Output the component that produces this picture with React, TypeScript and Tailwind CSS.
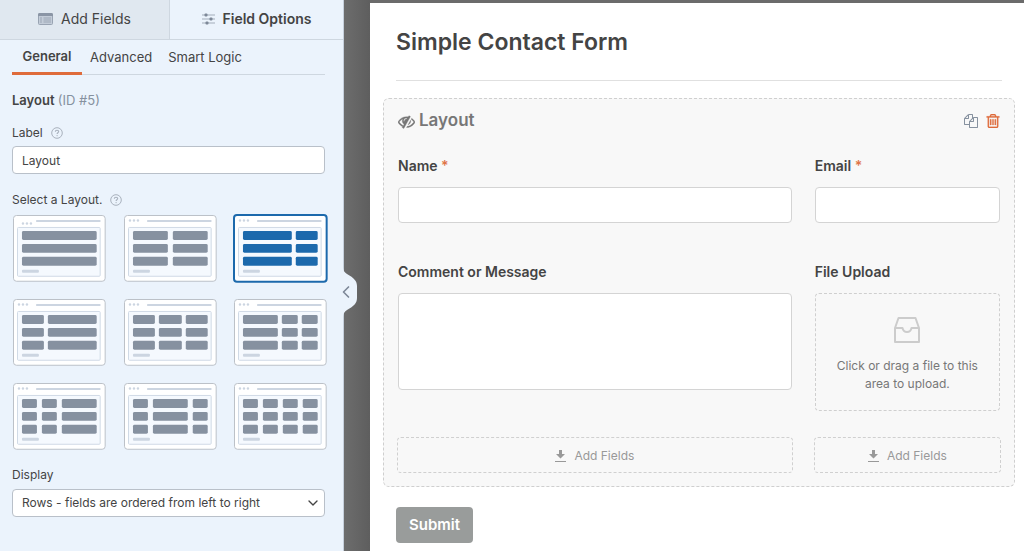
import { useState } from "react";
import { ChevronDown, ChevronLeft } from "lucide-react";

// columns of each preset, as [x, width] inside the thumbnail
const layouts = [
  { name: "One column", cols: [[9, 75]] },
  { name: "Two equal columns", cols: [[9, 35], [49, 35]] },
  { name: "Two thirds, one third", cols: [[9, 49], [62, 22]] },
  { name: "One third, two thirds", cols: [[9, 22], [35, 49]] },
  { name: "Three equal columns", cols: [[9, 22], [35, 23], [62, 22]] },
  { name: "Half, two quarters", cols: [[9, 35], [48, 16], [68, 16]] },
  { name: "Two quarters, half", cols: [[9, 15], [29, 15], [49, 35]] },
  { name: "Quarter, half, quarter", cols: [[9, 15], [29, 35], [69, 15]] },
  { name: "Four equal columns", cols: [[9, 15], [29, 15], [49, 15], [69, 15]] },
];

function LayoutThumb({ cols, active, low }: { cols: number[][]; active: boolean; low: boolean }) {
  const dotX = low ? 10 : 6;
  const dotY = low ? 8 : 5;
  return (
    <svg viewBox="0 0 93 67" className="block w-full overflow-visible">
      <rect
        x={active ? 0 : 0.5}
        y={active ? 0 : 0.5}
        width={active ? 93 : 92}
        height={active ? 67 : 66}
        rx="3"
        fill="#fff"
        stroke={active ? "#1c69ac" : "#bcc1c8"}
        strokeWidth={active ? 2 : 1}
      />
      {[0, 1, 2].map((i) => (
        <circle key={i} cx={dotX + i * 4} cy={dotY + 0.5} r="1.2" fill="#ccd5e1" />
      ))}
      <rect x="23" y="5" width="65" height="2" rx="1" fill="#ccd5e1" />
      <rect x="4.5" y="12.5" width="83" height="49" rx="1" fill="#f5f9fe" stroke="#d0dae6" />
      {[16, 29, 42].map((y) =>
        cols.map(([x, w]) => (
          <rect key={`${x}-${y}`} x={x} y={y} width={w} height="9" rx="1.5" fill={active ? "#1c69ac" : "#8691a0"} />
        ))
      )}
      <rect x="9" y="55" width="17" height="3" rx="1" fill="#ccd5e1" />
    </svg>
  );
}

function Help() {
  return (
    <svg viewBox="0 0 12 12" className="size-3 text-[#a9b1bd]" fill="none" stroke="currentColor">
      <circle cx="6" cy="6" r="5.3" strokeWidth="1" />
      <path d="M4.3 4.8c0-1 .7-1.6 1.7-1.6s1.7.6 1.7 1.4c0 1.1-1.6 1.1-1.6 2.3" strokeWidth="1.1" />
      <circle cx="6.1" cy="8.7" r=".35" strokeWidth=".7" />
    </svg>
  );
}

function ListIcon() {
  return (
    <svg viewBox="0 0 15 12" className="h-3 w-[15px]" fill="none">
      <rect x=".5" y=".5" width="14" height="11" rx="1" fill="#c3ccd8" stroke="#98a3b2" />
      <path d="M0 1.5Q0 0 1.5 0h12Q15 0 15 1.5V3H0z" fill="#8a95a5" />
      <path d="M2 5h2M2 7h2M2 9h2M5.5 5H13M5.5 7H13M5.5 9H13" stroke="#9ba6b5" />
    </svg>
  );
}

function SlidersIcon() {
  return (
    <svg viewBox="0 0 13 12" className="h-3 w-[13px]" fill="none" stroke="#a4adba">
      <path d="M0 2h13M0 6h13M0 10h13" strokeWidth="1.2" />
      <g fill="#7d8898" stroke="none">
        <rect x="2.5" y=".5" width="3" height="3" rx="1" />
        <rect x="7.5" y="4.5" width="3" height="3" rx="1" />
        <rect x="3.5" y="8.5" width="3" height="3" rx="1" />
      </g>
    </svg>
  );
}

function EyeSlash() {
  return (
    <svg viewBox="0 0 1792 1792" className="size-[17px]" fill="currentColor" stroke="currentColor" strokeWidth="30">
      <path d="M555 1335l78-141q-87-63-136-159t-49-203q0-121 61-225-229 117-381 353 167 258 427 375zm389-759q0-20-14-34t-34-14q-125 0-214.5 89.5t-89.5 214.5q0 20 14 34t34 14 34-14 14-34q0-86 61-147t147-61q20 0 34-14t14-34zm363-191q0 7-1 9-105 188-315 566t-316 567l-49 89q-10 16-28 16-12 0-134-70-16-10-16-28 0-12 44-87-143-65-263.5-173t-208.5-245q-20-31-20-69t20-69q153-235 380-371t496-136q89 0 180 17l54-97q10-16 28-16 5 0 18 6t31 15.5 33 18.5 31.5 18.5 19.5 11.5q16 10 16 27zm37 447q0 139-79 253.5t-209 164.5l280-502q8 45 8 84zm448 128q0 35-20 69-39 64-109 145-150 172-347.5 267t-419.5 95l74-132q212-18 392.5-137t301.5-307q-115-179-282-294l63-112q95 64 182.5 153t144.5 184q20 34 20 69z" />
    </svg>
  );
}

function FilesIcon() {
  return (
    <svg viewBox="0 0 1792 1792" className="size-[14px]" fill="currentColor">
      <path d="M1696 384q40 0 68 28t28 68v1216q0 40-28 68t-68 28h-960q-40 0-68-28t-28-68v-288h-544q-40 0-68-28t-28-68v-672q0-40 20-88t48-76l408-408q28-28 76-48t88-20h416q40 0 68 28t28 68v328q68-40 128-40h416zm-544 213l-299 299h299v-299zm-640-384l-299 299h299v-299zm196 647l316-316v-416h-384v416q0 40-28 68t-68 28h-416v640h512v-256q0-40 20-88t48-76zm956 804v-1152h-384v416q0 40-28 68t-68 28h-416v640h896z" />
    </svg>
  );
}

function TrashIcon() {
  return (
    <svg viewBox="128 128 1536 1536" className="size-[14px]" fill="currentColor" stroke="currentColor" strokeWidth="30">
      <path d="M704 736v576q0 14-9 23t-23 9h-64q-14 0-23-9t-9-23v-576q0-14 9-23t23-9h64q14 0 23 9t9 23zm256 0v576q0 14-9 23t-23 9h-64q-14 0-23-9t-9-23v-576q0-14 9-23t23-9h64q14 0 23 9t9 23zm256 0v576q0 14-9 23t-23 9h-64q-14 0-23-9t-9-23v-576q0-14 9-23t23-9h64q14 0 23 9t9 23zm128 724v-948h-896v948q0 22 7 40.5t14.5 27 10.5 8.5h832q3 0 10.5-8.5t14.5-27 7-40.5zm-672-1076h448l-48-117q-7-9-17-11h-317q-10 2-17 11zm928 32v64q0 14-9 23t-23 9h-96v948q0 83-47 143.5t-113 60.5h-832q-66 0-113-58.5t-47-141.5v-952h-96q-14 0-23-9t-9-23v-64q0-14 9-23t23-9h309l70-167q15-37 54-63t79-26h320q40 0 79 26t54 63l70 167h309q14 0 23 9t9 23z" />
    </svg>
  );
}

function AddFieldsButton() {
  return (
    <button className="-mx-px mt-[26px] flex h-9 items-center justify-center gap-2 rounded border border-dashed border-[#d0d0d0] pt-px text-xs text-[#999]">
      <svg viewBox="0 0 11 12" className="h-3 w-[11px]" fill="currentColor">
        <path d="M4 0h3v4h3L5.5 8.500 1 4h3zM0 11h11v1H0z" />
      </svg>
      Add Fields
    </button>
  );
}

function Required() {
  return <span className="text-[#df7448]">*</span>;
}

export default function App() {
  const [selected, setSelected] = useState(2);

  return (
    <div className="flex min-h-screen bg-[#6b6b6b] font-['Inter','Liberation_Sans',sans-serif] text-[#444]">
      <aside className="relative w-[344px] shrink-0 border-r border-[#c6d0dc] bg-[#ebf3fc]">
        <div className="flex h-10 text-sm">
          <button className="flex w-[170px] items-center justify-center gap-2 border-r border-b border-[#ced7e0] bg-[#e0e8f0] pb-0.5">
            <ListIcon />
            Add Fields
          </button>
          <button className="flex flex-1 items-center justify-center gap-2 border-b border-[#ced7e0] pb-0.5 font-semibold">
            <SlidersIcon />
            Field Options
          </button>
        </div>

        <div className="pr-[18px] pl-3 text-xs">
          <nav className="flex h-[35px] border-b border-[#ced7e0] text-[13px]">
            <a href="#general" className="-mb-px flex w-[70px] items-center justify-center border-b-3 border-[#df6b3b] pt-0.5 font-semibold">
              General
            </a>
            <a href="#advanced" className="ml-2 flex items-center pt-0.5">Advanced</a>
            <a href="#logic" className="ml-4 flex items-center pt-0.5">Smart Logic</a>
          </nav>

          <h2 className="mt-[17px] text-[13px] leading-4 font-semibold">
            Layout <span className="font-normal text-[#86919f]">(ID #5)</span>
          </h2>

          <div className="mt-[17px] flex items-center gap-2">
            <label htmlFor="label">Label</label>
            <Help />
          </div>
          <input
            id="label"
            defaultValue="Layout"
            className="mt-[5px] block h-7 w-full rounded border border-[#b9c0c9] bg-white px-[9px] pt-px"
          />

          <div className="mt-[18px] flex items-center gap-2">
            <span>Select a Layout.</span>
            <Help />
          </div>
          <div className="mt-[7px] -mr-0.5 ml-px grid grid-cols-3 gap-x-[18px] gap-y-[17px]">
            {layouts.map((l, i) => (
              <button key={l.name} aria-label={l.name} aria-pressed={selected === i} onClick={() => setSelected(i)}>
                <LayoutThumb cols={l.cols} active={selected === i} low={i === 0} />
              </button>
            ))}
          </div>

          <label htmlFor="display" className="mt-[18px] block leading-4">Display</label>
          <div className="relative mt-1.5">
            <select id="display" className="h-7 w-full appearance-none rounded border border-[#b9c0c9] bg-white px-[9px]">
              <option>Rows - fields are ordered from left to right</option>
              <option>Columns - fields are ordered from top to bottom</option>
            </select>
            <ChevronDown className="pointer-events-none absolute top-1.5 right-1 size-4" strokeWidth={2} />
          </div>
        </div>

        <button aria-label="Collapse sidebar" className="absolute top-[267px] left-[335px] flex h-[50px] w-[22px] items-center justify-center">
          <svg viewBox="0 0 22 50" className="absolute inset-0 size-full" fill="#ebf3fc">
            <path d="M0 0h8c0 3 1 5 4 7 7 4 10 7 10 12v12c0 5-3 8-10 12-3 2-4 4-4 7H0z" />
          </svg>
          <ChevronLeft className="relative size-5 text-[#7d8898]" strokeWidth={2} />
        </button>
      </aside>

      <div className="w-[26px] shrink-0 bg-linear-to-r from-[#6d6d6d] to-[#5e5e5e]" />

      <main className="mt-[3px] min-w-0 flex-1 bg-white pr-[9px] pb-2 pl-[13px]">
        <h1 className="mr-[13px] ml-[13px] border-b border-[#e0e0e0] pt-[25px] pb-[23px] text-[23px] leading-[29px] font-semibold">
          Simple Contact Form
        </h1>

        <section className="mt-[17px] rounded-md border border-dashed border-[#cfcfcf] bg-[#f8f8f8] px-[14px] pt-3 pb-[13px]">
          <header className="flex h-5 items-center justify-between">
            <h2 className="flex items-center gap-1 text-[17px] font-semibold text-[#777]">
              <EyeSlash />
              Layout
            </h2>
            <div className="flex gap-2">
              <button aria-label="Duplicate" className="text-[#86919f]"><FilesIcon /></button>
              <button aria-label="Delete" className="text-[#df6b3b]"><TrashIcon /></button>
            </div>
          </header>

          <div className="mt-[25px] grid grid-cols-[68fr_32fr] gap-x-[23px] text-sm">
            <div className="flex min-w-0 flex-col">
              <label htmlFor="name" className="font-semibold">Name <Required /></label>
              <input id="name" className="mt-[11px] h-9 rounded border border-[#d4d4d4] bg-white px-2" />
            </div>
            <div className="flex min-w-0 flex-col">
              <label htmlFor="email" className="font-semibold">Email <Required /></label>
              <input id="email" type="email" className="mt-[11px] h-9 rounded border border-[#d4d4d4] bg-white px-2" />
            </div>

            <div className="mt-[39px] flex min-w-0 flex-col">
              <label htmlFor="message" className="font-semibold">Comment or Message</label>
              <textarea id="message" className="mt-[11px] h-[97px] resize-none rounded border border-[#d4d4d4] bg-white p-2" />
            </div>
            <div className="mt-[39px] flex min-w-0 flex-col">
              <span className="font-semibold">File Upload</span>
              <button className="mt-[11px] flex h-[118px] flex-col items-center rounded border border-dashed border-[#cfcfcf] px-4 pt-[23px] text-xs leading-[18px] text-[#777]">
                <svg viewBox="0 0 26 26" className="mb-3.5 size-[26px]" fill="none" stroke="#ccc" strokeWidth="2" strokeLinejoin="round">
                  <path d="M1 11 4.500 1h17L25 11v14H1zM1 11h7.500c.5 2.500 2 4 4.500 4s4-1.500 4.500-4H25" />
                </svg>
                Click or drag a file to this area to upload.
              </button>
            </div>

            <div className="flex min-w-0 flex-col"><AddFieldsButton /></div>
            <div className="flex min-w-0 flex-col"><AddFieldsButton /></div>
          </div>
        </section>

        <button className="mt-5 ml-[13px] h-9 rounded bg-[#999c9b] px-[13px] text-[15px] font-semibold text-white">
          Submit
        </button>
      </main>
    </div>
  );
}
